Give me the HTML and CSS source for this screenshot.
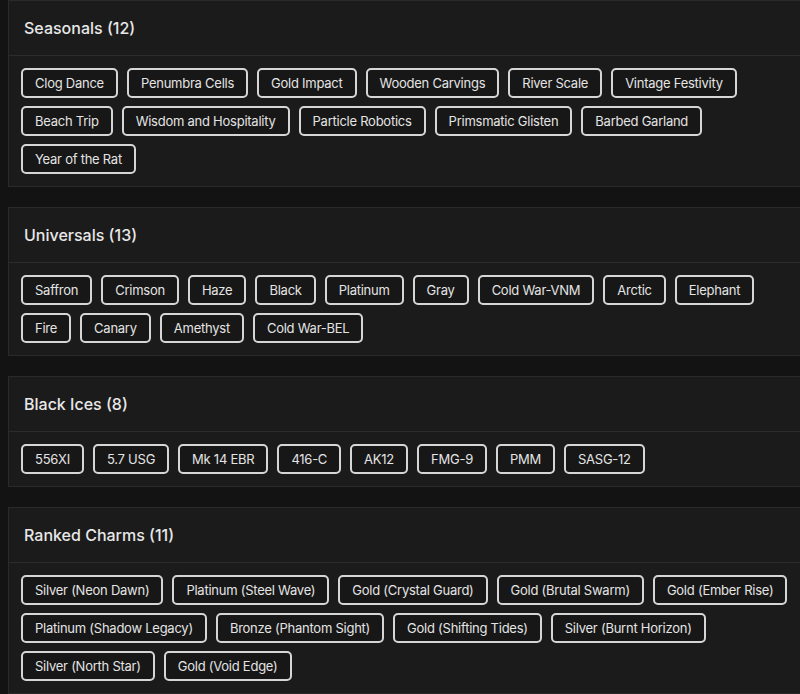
FILE: index.html
```html
<!DOCTYPE html>
<html lang="en">
<head>
<meta charset="utf-8">
<title>Collection</title>
<link rel="stylesheet" href="styles.css">
</head>
<body>
<main class="page">
  <section class="card">
    <h2 class="card-title">Seasonals (12)</h2>
    <div class="tags">
      <span class="tag">Clog Dance</span>
      <span class="tag">Penumbra Cells</span>
      <span class="tag">Gold Impact</span>
      <span class="tag">Wooden Carvings</span>
      <span class="tag">River Scale</span>
      <span class="tag">Vintage Festivity</span>
      <span class="tag">Beach Trip</span>
      <span class="tag">Wisdom and Hospitality</span>
      <span class="tag">Particle Robotics</span>
      <span class="tag">Primsmatic Glisten</span>
      <span class="tag">Barbed Garland</span>
      <span class="tag">Year of the Rat</span>
    </div>
  </section>
  <section class="card">
    <h2 class="card-title">Universals (13)</h2>
    <div class="tags">
      <span class="tag">Saffron</span>
      <span class="tag">Crimson</span>
      <span class="tag">Haze</span>
      <span class="tag">Black</span>
      <span class="tag">Platinum</span>
      <span class="tag">Gray</span>
      <span class="tag">Cold War-VNM</span>
      <span class="tag">Arctic</span>
      <span class="tag">Elephant</span>
      <span class="tag">Fire</span>
      <span class="tag">Canary</span>
      <span class="tag">Amethyst</span>
      <span class="tag">Cold War-BEL</span>
    </div>
  </section>
  <section class="card">
    <h2 class="card-title">Black Ices (8)</h2>
    <div class="tags">
      <span class="tag">556XI</span>
      <span class="tag">5.7 USG</span>
      <span class="tag">Mk 14 EBR</span>
      <span class="tag">416-C</span>
      <span class="tag">AK12</span>
      <span class="tag">FMG-9</span>
      <span class="tag">PMM</span>
      <span class="tag">SASG-12</span>
    </div>
  </section>
  <section class="card">
    <h2 class="card-title">Ranked Charms (11)</h2>
    <div class="tags">
      <span class="tag">Silver (Neon Dawn)</span>
      <span class="tag">Platinum (Steel Wave)</span>
      <span class="tag">Gold (Crystal Guard)</span>
      <span class="tag">Gold (Brutal Swarm)</span>
      <span class="tag">Gold (Ember Rise)</span>
      <span class="tag">Platinum (Shadow Legacy)</span>
      <span class="tag">Bronze (Phantom Sight)</span>
      <span class="tag">Gold (Shifting Tides)</span>
      <span class="tag">Silver (Burnt Horizon)</span>
      <span class="tag">Silver (North Star)</span>
      <span class="tag">Gold (Void Edge)</span>
    </div>
  </section>
</main>
</body>
</html>
```

FILE: styles.css
```css
html, body {
  margin: 0;
  padding: 0;
  background: #131313;
  overflow: hidden;
}

body {
  font-family: Inter, "Noto Sans", "Liberation Sans", sans-serif;
  color: #e6e6e6;
}

.page {
  width: 800px;
  padding-left: 8px;
  display: flex;
  flex-direction: column;
  gap: 20px;
}

.card {
  background: #1b1b1b;
  border: 1px solid #2a2a2a;
}

.card-title {
  margin: 0;
  height: 55px;
  box-sizing: border-box;
  padding: 0 15px;
  display: flex;
  align-items: center;
  font-size: 16px;
  font-weight: 500;
  color: #e8e8e8;
  border-bottom: 1px solid #2c2c2c;
}

.tags {
  display: flex;
  flex-wrap: wrap;
  gap: 8px 9px;
  padding: 12px;
}

.tag {
  box-sizing: border-box;
  height: 30px;
  display: inline-flex;
  align-items: center;
  padding: 0 12px;
  border: 2px solid #d6d6d6;
  border-radius: 5px;
  background: #171717;
  font-size: 13px;
  font-weight: 400;
  letter-spacing: -0.25px;
  color: #e4e4e4;
  white-space: nowrap;
}
```
